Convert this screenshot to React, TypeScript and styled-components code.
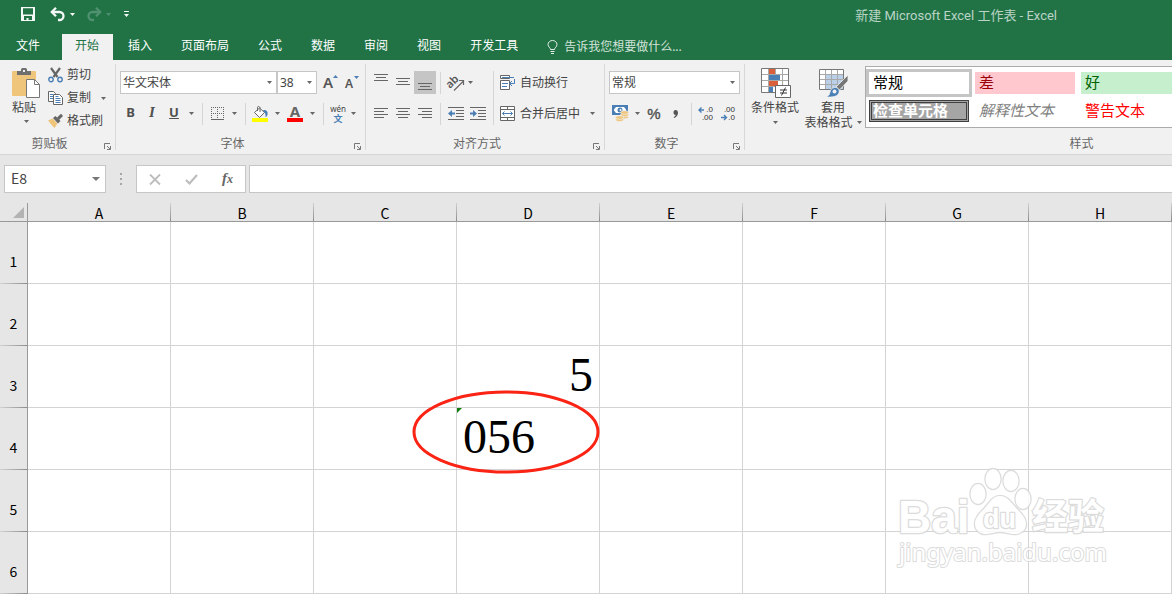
import React from "react";
import styled, { createGlobalStyle, css } from "styled-components";

const GlobalStyle = createGlobalStyle`
  * { box-sizing: border-box; }
  body {
    margin: 0;
    background: #e6e6e6;
    color: #444;
    font: 12px/16px "Noto Sans", "Noto Sans CJK SC", sans-serif;
  }
  button, input, select { font: inherit; color: inherit; margin: 0; }
  svg { display: block; flex: none; overflow: visible; }
`;

const Window = styled.div`
  overflow: hidden;
`;

/* ---------- title bar and tabs ---------- */

const TitleBar = styled.header`
  display: flex;
  align-items: center;
  height: 34px;
  padding: 0 115px 6px 17px;
  background: #217346;
  color: #fff;
`;

const QuickButton = styled.button<{ $w?: number; $dim?: boolean }>`
  display: flex;
  align-items: center;
  justify-content: center;
  flex: none;
  width: ${(p) => p.$w ?? 22}px;
  height: 22px;
  padding: 0;
  border: 0;
  background: none;
  color: ${(p) => (p.$dim ? "#4f9170" : "#f4f8f6")};
`;

const QuickGap = styled.span`
  width: 7px;
`;

const DocTitle = styled.h1`
  margin: 0 0 0 auto;
  padding-top: 4px;
  font: 400 13px/16px Roboto, "Noto Sans CJK SC", sans-serif;
  white-space: nowrap;
  color: #b9d3c5;
`;

const TabStrip = styled.nav`
  display: flex;
  gap: 2px;
  height: 26px;
  background: #217346;
  color: #fff;
`;

const Tab = styled.button<{ $active?: boolean; $file?: boolean }>`
  flex: none;
  padding: ${(p) => (p.$file ? "0 20px 2px 16px" : "0 14px 2px 13px")};
  border: 0;
  background: ${(p) => (p.$active ? "#f1f1f1" : "none")};
  color: ${(p) => (p.$active ? "#217346" : "#fff")};
  white-space: nowrap;
`;

const TellMe = styled.button`
  display: flex;
  align-items: center;
  gap: 6px;
  padding: 0 13px;
  border: 0;
  background: none;
  color: #d3e3da;
  white-space: nowrap;
`;

/* ---------- ribbon ---------- */

const Ribbon = styled.section`
  display: flex;
  padding: 4px 0;
  overflow: hidden;
  background: #f1f1f1;
  border-bottom: 1px solid #d5d5d5;
`;

const Group = styled.section<{ $w: number }>`
  display: flex;
  flex-direction: column;
  flex: none;
  width: ${(p) => p.$w}px;
  height: 86px;
  border-right: 1px solid #d8d8d8;
`;

const GroupBody = styled.div<{ $top?: number; $left?: number }>`
  display: flex;
  flex: 1;
  align-items: flex-start;
  padding: ${(p) => p.$top ?? 7}px 0 0 ${(p) => p.$left ?? 4}px;
`;

const GroupFooter = styled.footer`
  display: flex;
  align-items: flex-end;
  height: 13px;
  color: #666;
  text-align: center;
  line-height: 12px;
`;

const FooterLabel = styled.span`
  flex: 1;
`;

const Launcher = styled.button`
  display: flex;
  justify-content: center;
  width: 16px;
  padding: 0;
  border: 0;
  background: none;
`;

const Stack = styled.div<{ $gap?: number }>`
  display: flex;
  flex-direction: column;
  gap: ${(p) => p.$gap ?? 8}px;
`;

const Row = styled.div`
  display: flex;
  align-items: center;
  height: 23px;
`;

const IconButton = styled.button<{ $on?: boolean; $w?: number }>`
  display: flex;
  align-items: center;
  justify-content: center;
  flex: none;
  width: ${(p) => p.$w ?? 22}px;
  height: 23px;
  padding: 0;
  border: 0;
  background: ${(p) => (p.$on ? "#c5c5c5" : "none")};
  color: #444;
`;

const Glyph = styled.span<{ $style?: "bold" | "italic" | "underline" | "percent" }>`
  padding-bottom: 3px;
  color: #505050;
  font-size: 13px;
  font-weight: 700;
  ${(p) => p.$style === "italic" && css`font-family: "Liberation Serif", serif; font-style: italic; font-size: 15px;`}
  ${(p) => p.$style === "underline" && css`text-decoration: underline;`}
  ${(p) => p.$style === "percent" && css`padding-bottom: 0; font: 400 15px/16px "Liberation Sans", sans-serif; -webkit-text-stroke: 0.4px;`}
`;

const Divider = styled.span<{ $tall?: boolean }>`
  flex: none;
  width: 1px;
  height: ${(p) => (p.$tall ? 54 : 22)}px;
  margin: 0 3px 0 4px;
  background: #d5d5d5;
`;

const Spacer = styled.span<{ $w: number }>`
  flex: none;
  width: ${(p) => p.$w}px;
`;

const PasteButton = styled.button`
  display: flex;
  flex-direction: column;
  align-items: center;
  width: 34px;
  padding: 4px 0 0;
  border: 0;
  background: none;
`;

const PasteText = styled.span`
  padding: 2px 4px 4px 0;
`;

const BigButton = styled.button<{ $w: number }>`
  display: flex;
  flex-direction: column;
  align-items: center;
  flex: none;
  width: ${(p) => p.$w}px;
  padding: 0;
  border: 0;
  background: none;
  line-height: 15px;
  white-space: nowrap;
`;

const BigIcon = styled.span`
  display: flex;
  align-items: center;
  height: 34px;
  padding-left: 2px;
`;

const BigLine = styled.span`
  display: flex;
  align-items: center;
  gap: 4px;
  min-height: 15px;
`;

const TextButton = styled.button<{ $h?: number }>`
  display: flex;
  align-items: center;
  gap: 4px;
  height: ${(p) => p.$h ?? 23}px;
  padding: 0;
  border: 0;
  background: none;
  white-space: nowrap;
`;

const DropBox = styled.label<{ $w: number }>`
  display: grid;
  flex: none;
  align-items: center;
  width: ${(p) => p.$w}px;
  height: 23px;
  background: #fff;
  border: 1px solid #c6c6c6;

  & > select, & > svg { grid-area: 1 / 1; }
  & > svg { justify-self: end; margin-right: 4px; pointer-events: none; }
`;

const Select = styled.select`
  width: 100%;
  height: 21px;
  padding: 0 2px;
  border: 0;
  background: none;
  appearance: none;
`;

const Gallery = styled.div`
  display: grid;
  grid-template-columns: repeat(6, 100px);
  grid-auto-rows: 22px;
  gap: 6px;
  flex: 1;
  padding: 5px 3px;
  background: #fff;
  border: 1px solid #ababab;
`;

type StyleKind = "normal" | "bad" | "good" | "check" | "explain" | "warn" | "plain";

const kinds: Record<StyleKind, ReturnType<typeof css>> = {
  normal: css`background: #fff; color: #000; outline: 3px solid #c5c5c5;`,
  bad: css`background: #ffc7ce; color: #9c0006;`,
  good: css`background: #c6efce; color: #006100;`,
  check: css`background: #a5a5a5; color: #fff; font-weight: 700; border: 3px double #3f3f3f; padding: 0 1px 2px;`,
  explain: css`background: #fff; color: #7f7f7f; font-style: italic;`,
  warn: css`background: #fff; color: #f00;`,
  plain: css`background: #fff; color: #000;`,
};

const StyleCell = styled.button<{ $kind: StyleKind }>`
  display: flex;
  align-items: center;
  padding: 0 4px 2px;
  border: 0;
  font: 15px/16px "Noto Sans CJK SC", sans-serif;
  white-space: nowrap;
  ${(p) => kinds[p.$kind]}
`;

/* ---------- formula bar ---------- */

const FormulaBar = styled.section`
  display: flex;
  align-items: center;
  padding: 10px 0 10px 4px;
`;

const Field = styled.div<{ $w?: number }>`
  display: flex;
  align-items: center;
  flex: ${(p) => (p.$w ? "none" : 1)};
  width: ${(p) => (p.$w ? `${p.$w}px` : "auto")};
  height: 28px;
  background: #fff;
  border: 1px solid #c6c6c6;
  border-right-width: ${(p) => (p.$w ? 1 : 0)}px;
`;

const PlainInput = styled.input`
  flex: 1;
  min-width: 0;
  height: 26px;
  padding: 0 6px 2px;
  border: 0;
  background: none;
  font: 14px/16px "Noto Sans CJK SC", sans-serif;
`;

const Grip = styled.span`
  display: flex;
  justify-content: center;
  width: 30px;
`;

const Tools = styled.div`
  display: flex;
  justify-content: space-around;
  flex: 1;
`;

/* ---------- sheet ---------- */

const SheetArea = styled.main`
  position: relative;
`;

const Sheet = styled.table`
  width: 100%;
  table-layout: fixed;
  border-collapse: separate;
  border-spacing: 0;
  background: #fff;
  color: #000;
`;

const Corner = styled.th`
  width: 28px;
  height: 19px;
  padding: 0 3px 3px 0;
  vertical-align: bottom;
  background: #e6e6e6;
  border-right: 1px solid #999;
  border-bottom: 1px solid #999;

  & > svg { margin-left: auto; }
`;

const ColumnHead = styled.th`
  height: 19px;
  padding: 3px 1px 0 0;
  background: linear-gradient(#d0d0d0, #8c8c8c) right / 1px 100% no-repeat #e6e6e6;
  border-bottom: 1px solid #999;
  font: 400 14px/15px "Noto Sans CJK SC", sans-serif;
  text-align: center;
`;

const RowHead = styled.th`
  height: 62px;
  padding: 16px 0 0;
  background: linear-gradient(90deg, #d0d0d0, #8c8c8c) bottom / 100% 1px no-repeat #e6e6e6;
  border-right: 1px solid #999;
  font: 400 14px/16px "Noto Sans CJK SC", sans-serif;
  text-align: center;
`;

const Cell = styled.td<{ $align?: "left" | "right" }>`
  position: relative;
  height: 62px;
  padding: 0 6px 4px;
  border-right: 1px solid #d4d4d4;
  border-bottom: 1px solid #d4d4d4;
  font: 48px/56px "Liberation Serif", serif;
  text-align: ${(p) => p.$align ?? "left"};
`;

const ErrorFlag = styled.svg`
  position: absolute;
  top: 0;
  left: 0;
`;

const Circle = styled.svg`
  position: absolute;
  top: -19px;
  left: -46px;
  z-index: 1;
`;

const Watermark = styled.svg`
  position: absolute;
  right: 60px;
  bottom: 16px;
  pointer-events: none;
  opacity: 0.85;
  paint-order: stroke;
`;

/* ---------- icons ---------- */

const Arrow = ({ color = "#666", w = 5 }: { color?: string; w?: number }) => (
  <svg width={w} height={3} viewBox="0 0 5 3">
    <path d="M0 0h5L2.5 3z" fill={color} />
  </svg>
);

const SaveIcon = () => (
  <svg width="14" height="14" viewBox="0 0 14 14">
    <path fillRule="evenodd" fill="currentColor" d="M0 0h14v14H0zM2 1.300h10V7.500H2zM3 9h8v4H7.500v-2H5.500v2H3z" />
  </svg>
);

const UndoIcon = ({ flip }: { flip?: boolean }) => (
  <svg width="15" height="14" viewBox="0 0 15 14">
    <g transform={flip ? "matrix(-1 0 0 1 15 0)" : undefined} fill="none" stroke="currentColor" strokeWidth="2.300">
      <path d="M2 5h7.500a4 4 0 0 1 0 8H8" />
      <path d="M6 .8 1.800 5 6 9.200" />
    </g>
  </svg>
);

const CustomizeIcon = () => (
  <svg width="5" height="6" viewBox="0 0 5 6">
    <path d="M0 0h5v1H0zM0 3h5L2.500 6z" fill="currentColor" />
  </svg>
);

const BulbIcon = () => (
  <svg width="11" height="14" viewBox="0 0 11 14" fill="none" stroke="#e4eee8">
    <path d="M3.500 9.500C3.500 7.500 1 7 1 4.500a4.500 4 0 0 1 9 0C10 7 7.500 7.500 7.500 9.500zM3.500 11.500h4M4 13.500h3" />
  </svg>
);

const PasteIcon = () => (
  <svg width="28" height="30" viewBox="0 0 28 30">
    <rect y="3" width="24" height="25" rx="1" fill="#eec57b" />
    <path d="M5 7V3h4V1.500Q9 0 10.500 0h3Q15 0 15 1.500V3h4v4z" fill="#6f6f6f" />
    <rect x="11" y="2" width="2" height="2" fill="#f1f1f1" />
    <path d="M14.500 11.500h8l5 5v13h-13z" fill="#fff" stroke="#777" />
    <path d="M22.500 11.500v5h5" fill="none" stroke="#777" />
  </svg>
);

const CutIcon = () => (
  <svg width="15" height="16" viewBox="0 0 15 16" fill="none">
    <path d="M3 1l6.500 9M12 1L5.500 10" stroke="#666" strokeWidth="2.200" />
    <circle cx="3" cy="12.500" r="2.200" stroke="#4a7fb5" strokeWidth="1.400" />
    <circle cx="12" cy="12.500" r="2.200" stroke="#4a7fb5" strokeWidth="1.400" />
  </svg>
);

const CopyIcon = () => (
  <svg width="15" height="14" viewBox="0 0 15 14" fill="#fff">
    <path d="M.5.5h5l2 2v8h-7z" stroke="#666" />
    <path d="M2 3.500h3M2 5.500h3M2 7.500h3" stroke="#4a7fb5" />
    <path d="M5.500 3.500h6l3 3v7h-9z" stroke="#666" />
    <path d="M7.500 7.500h5M7.500 9.500h5M7.500 11.500h5M7.500 5.500h3" stroke="#4a7fb5" />
  </svg>
);

const PainterIcon = () => (
  <svg width="15" height="14" viewBox="0 0 15 14">
    <path d="M0 6.500 4.500 4.500l5 5L6.500 14C4.500 12 2.500 9.500 0 6.500z" fill="#eec57b" />
    <path d="M5 4l2.500-2 5 5-2.500 2.500z" fill="#666" />
    <path d="M9 3.500 13-.2l2 2.200-4 4z" fill="#666" />
  </svg>
);

const LauncherIcon = () => (
  <svg width="7" height="7" viewBox="0 0 7 7" fill="none" stroke="#777">
    <path d="M.5 6V.5H6M3 3l3 3M6.500 3v3.500H3" />
  </svg>
);

const SizeIcon = ({ down }: { down?: boolean }) => (
  <svg width="16" height="17" viewBox="0 0 16 17">
    <text x="0" y="14" fontFamily="Noto Sans, sans-serif" fontWeight="600" fontSize={down ? 12 : 15} fill="#555">A</text>
    <path d={down ? "M9 2h5l-2.500 3z" : "M10 4h5l-2.500-3z"} fill="#4a7fb5" />
  </svg>
);

const BorderIcon = () => (
  <svg width="13" height="13" viewBox="0 0 13 13" stroke="#666">
    <path d="M0 .5h13M0 6.500h13M.5 0v12M6.500 0v12M12.500 0v12" strokeDasharray="1 1" />
    <path d="M0 12.500h13" />
  </svg>
);

const FillIcon = () => (
  <svg width="16" height="16" viewBox="0 0 16 16">
    <path d="M2.500 6.500 7.500 2l5 4.500-5 5z" fill="#fff" stroke="#666" />
    <path d="M5.500 5V1.500Q5.500.5 6.500.5T8 1.500V6" fill="none" stroke="#666" />
    <path d="M11 4c4-.5 5 2 4.500 4.500C15.300 10 14.500 11 13.500 11c.5-3-.5-4-2.500-7z" fill="#4a7fb5" />
    <path d="M0 12h16v4H0z" fill="#ff0" />
  </svg>
);

const FontColorIcon = () => (
  <svg width="16" height="16" viewBox="0 0 16 16">
    <text x="8" y="11" textAnchor="middle" fontFamily="Noto Sans, sans-serif" fontWeight="700" fontSize="15" fill="#666">A</text>
    <path d="M0 12h16v4H0z" fill="#f00" />
  </svg>
);

const PinyinIcon = () => (
  <svg width="18" height="18" viewBox="0 0 18 18">
    <text x="9" y="7" textAnchor="middle" fontFamily="Noto Sans, sans-serif" fontSize="8" fill="#444">wén</text>
    <text x="9" y="17" textAnchor="middle" fontFamily="Noto Sans CJK SC, sans-serif" fontWeight="700" fontSize="9" fill="#4a7fb5">文</text>
  </svg>
);

const LinesIcon = ({ lines }: { lines: [number, number, number][] }) => (
  <svg width="14" height="17" viewBox="0 0 14 17" stroke="#666">
    {lines.map(([x, y, w]) => (
      <path key={y} d={`M${x} ${y}.5h${w}`} />
    ))}
  </svg>
);

const OrientationIcon = () => (
  <svg width="17" height="16" viewBox="0 0 17 16">
    <text x="0" y="11" transform="rotate(-45 5 9)" fontFamily="Noto Sans, sans-serif" fontWeight="600" fontSize="11" fill="#555">ab</text>
    <path d="M7 15.500 16 6.500M12 5.500H16.500V10" fill="none" stroke="#666" strokeWidth="1.200" />
  </svg>
);

const IndentIcon = ({ right }: { right?: boolean }) => (
  <svg width="16" height="13" viewBox="0 0 16 13">
    <path d="M0 .5h16M8 3.500h8M8 6.500h8M8 9.500h8M0 12.500h16" stroke="#666" />
    <path d={right ? "M0 5.500h3V3l4 3.500L3 10V7.500H0z" : "M7 5.500H4V3L0 6.500 4 10V7.500h3z"} fill="#4a7fb5" />
  </svg>
);

const WrapIcon = () => (
  <svg width="16" height="15" viewBox="0 0 16 15" fill="none">
    <path d="M.5.5h9v3h-9zM.5 5.500h9v9h-9z" fill="#fff" stroke="#666" />
    <path d="M2 2.500h12M2 8.500h6M2 11.500h5M14.500 4v4.500H10M12 6l-2.500 2.500L12 11" stroke="#4a7fb5" />
  </svg>
);

const MergeIcon = () => (
  <svg width="16" height="15" viewBox="0 0 16 15" fill="none">
    <path d="M.5.5h14v14H.5zM.5 3.500h14M.5 11.500h14M7.500.5v3M7.500 11.500v3" fill="#fff" stroke="#666" />
    <path d="M2.500 7.500h10M4.500 5.500l-2 2 2 2M10.500 5.500l2 2-2 2" stroke="#4a7fb5" />
  </svg>
);

const MoneyIcon = () => (
  <svg width="17" height="17" viewBox="0 0 17 17">
    <rect width="16" height="10" fill="#4a7fb5" />
    <path d="M2 2h12v6H2z" fill="#fff" />
    <path d="M2 4.500 4 2H2zM14 4.500 12 2h2zM2 5.500 4 8H2z" fill="#4a7fb5" />
    <circle cx="8" cy="5" r="2.500" fill="#4a7fb5" />
    <circle cx="8.500" cy="5" r="1" fill="#fff" />
    <g fill="#eec57b" stroke="#f1f1f1" strokeWidth=".7">
      <ellipse cx="12.500" cy="12" rx="4" ry="1.800" />
      <ellipse cx="12.500" cy="9.800" rx="4" ry="1.800" />
      <ellipse cx="12.500" cy="7.500" rx="4" ry="1.800" />
      <ellipse cx="7.500" cy="14.800" rx="4" ry="1.800" />
      <ellipse cx="7.500" cy="12.500" rx="4" ry="1.800" />
    </g>
  </svg>
);

const CommaIcon = () => (
  <svg width="6" height="8" viewBox="0 0 6 8">
    <path d="M2.500 0C4.200 0 5 1.200 5 2.700 5 5.500 3.500 7 1 8L.7 7.200C2 6.500 2.600 5.800 2.700 4.800 1.300 5 .5 4 .5 2.500.5 1 1.200 0 2.500 0z" fill="#555" />
  </svg>
);

const DecimalIcon = ({ less }: { less?: boolean }) => (
  <svg width="16" height="15" viewBox="0 0 16 15" fontFamily="Liberation Sans, sans-serif" fontSize="8" fill="#333">
    <text x="15" y="6" textAnchor="end">{less ? ".00" : ".0"}</text>
    <text x="15" y="14" textAnchor="end">{less ? ".0" : ".00"}</text>
    <path d={less ? "M1 11.500h5M4 9l2.500 2.500L4 14" : "M1 4h5M3.500 1.500 1 4l2.500 2.500"} fill="none" stroke="#4a7fb5" strokeWidth="1.400" />
  </svg>
);

const ConditionalIcon = () => (
  <svg width="31" height="31" viewBox="0 0 31 31">
    <path d="M.5.5h27v24H.5z" fill="#fff" stroke="#777" />
    <path d="M7.500 1v23M14.500 1v23M21.500 1v23M1 6.500h26M1 12.500h26M1 18.500h26" stroke="#a8a8a8" />
    <path d="M8 1h6v5H8zM8 13h9v5H8z" fill="#d9603b" />
    <path d="M8 7h11v5H8zM8 19h4v5H8z" fill="#4a7fb5" />
    <path d="M14.500 17.500h15v12h-15z" fill="#fff" stroke="#666" />
    <path d="M19 22h7M19 25h7M24.500 19.500l-4 8" stroke="#333" />
  </svg>
);

const TableFormatIcon = () => (
  <svg width="30" height="29" viewBox="0 0 30 29">
    <path d="M.5.5h24v20H.5z" fill="#fff" />
    <path d="M7 6h18v15H7z" fill="#b9d0e8" />
    <path d="M6.500 1v20M12.500 1v20M18.500 1v20M1 5.500h23M1 10.500h23M1 15.500h23" stroke="#a8a8a8" />
    <path d="M.5.5h24v20H.5z" fill="none" stroke="#777" />
    <path d="M29 6v6l-8.500 9-3.500-3z" fill="#777" stroke="#f1f1f1" strokeWidth=".8" />
    <path d="M15.500 18.500c3-.5 5.500 2 4.500 5-1.200 4-6 5-13 4.500 3.500-1.500 3.500-3 4-5 .6-2.500 2-4.200 4.500-4.500z" fill="#4a7fb5" stroke="#f1f1f1" strokeWidth=".8" />
    <circle cx="15.500" cy="22.500" r="2" fill="#f1f1f1" />
  </svg>
);

/* ---------- data ---------- */

const tabs = ["开始", "插入", "页面布局", "公式", "数据", "审阅", "视图", "开发工具"];
const columns = ["A", "B", "C", "D", "E", "F", "G", "H"];
const rows = [1, 2, 3, 4, 5, 6];

const styleCells: [string, StyleKind][] = [
  ["常规", "normal"], ["差", "bad"], ["好", "good"], ["", "plain"], ["", "plain"], ["", "plain"],
  ["检查单元格", "check"], ["解释性文本", "explain"], ["警告文本", "warn"],
];

const Footer = ({ label, launcher = true }: { label: string; launcher?: boolean }) => (
  <GroupFooter>
    <FooterLabel>{label}</FooterLabel>
    {launcher && <Launcher aria-label={`${label}设置`}><LauncherIcon /></Launcher>}
  </GroupFooter>
);

const DropArrow = ({ label, w = 13 }: { label: string; w?: number }) => (
  <IconButton $w={w} aria-label={label}><Arrow /></IconButton>
);

const Dropdown = ({ label, value, width }: { label: string; value: string; width: number }) => (
  <DropBox $w={width}>
    <Select aria-label={label} defaultValue={value}>
      <option>{value}</option>
    </Select>
    <Arrow />
  </DropBox>
);

export default function App() {
  return (
    <Window>
      <GlobalStyle />
      <TitleBar>
        <QuickButton aria-label="保存"><SaveIcon /></QuickButton>
        <QuickGap />
        <QuickButton aria-label="撤消"><UndoIcon /></QuickButton>
        <QuickButton $w={9} aria-label="撤消列表"><Arrow color="currentColor" /></QuickButton>
        <QuickGap />
        <QuickButton $dim $w={20} aria-label="恢复"><UndoIcon flip /></QuickButton>
        <QuickButton $w={9} $dim aria-label="恢复列表"><Arrow color="currentColor" /></QuickButton>
        <QuickButton $w={26} aria-label="自定义快速访问工具栏"><CustomizeIcon /></QuickButton>
        <DocTitle>新建 Microsoft Excel 工作表 - Excel</DocTitle>
      </TitleBar>
      <TabStrip>
        <Tab $file>文件</Tab>
        {tabs.map((t, i) => (
          <Tab key={t} $active={i === 0}>{t}</Tab>
        ))}
        <TellMe><BulbIcon />告诉我您想要做什么...</TellMe>
      </TabStrip>

      <Ribbon>
        <Group $w={116}>
          <GroupBody $top={0} $left={9}>
            <PasteButton>
              <PasteIcon />
              <PasteText>粘贴</PasteText>
              <Arrow />
            </PasteButton>
            <Spacer $w={5} />
            <Stack $gap={1}>
              <TextButton $h={22}><CutIcon />剪切</TextButton>
              <TextButton $h={22}><CopyIcon />复制<Spacer $w={2} /><Arrow /></TextButton>
              <TextButton $h={22}><PainterIcon />格式刷</TextButton>
            </Stack>
          </GroupBody>
          <Footer label="剪贴板" />
        </Group>

        <Group $w={250}>
          <GroupBody>
            <Stack>
              <Row>
                <Dropdown label="字体" value="华文宋体" width={157} />
                <Dropdown label="字号" value="38" width={40} />
                <Spacer $w={3} />
                <IconButton aria-label="增大字号"><SizeIcon /></IconButton>
                <IconButton aria-label="减小字号"><SizeIcon down /></IconButton>
              </Row>
              <Row>
                <IconButton $w={21} aria-label="加粗"><Glyph $style="bold">B</Glyph></IconButton>
                <IconButton aria-label="倾斜"><Glyph $style="italic">I</Glyph></IconButton>
                <IconButton aria-label="下划线"><Glyph $style="underline">U</Glyph></IconButton>
                <DropArrow label="下划线样式" />
                <Divider />
                <IconButton aria-label="边框"><BorderIcon /></IconButton>
                <DropArrow label="边框样式" />
                <Divider />
                <IconButton aria-label="填充颜色"><FillIcon /></IconButton>
                <DropArrow label="选择填充颜色" />
                <IconButton aria-label="字体颜色"><FontColorIcon /></IconButton>
                <DropArrow label="选择字体颜色" />
                <Divider />
                <IconButton aria-label="拼音"><PinyinIcon /></IconButton>
                <DropArrow label="拼音设置" w={9} />
              </Row>
            </Stack>
          </GroupBody>
          <Footer label="字体" />
        </Group>

        <Group $w={239}>
          <GroupBody>
            <Stack>
              <Row>
                <IconButton aria-label="顶端对齐"><LinesIcon lines={[[0, 0, 14], [2, 3, 10], [0, 6, 14]]} /></IconButton>
                <IconButton aria-label="垂直居中"><LinesIcon lines={[[0, 4, 14], [2, 7, 10], [0, 10, 14]]} /></IconButton>
                <IconButton $on aria-label="底端对齐"><LinesIcon lines={[[0, 9, 14], [2, 12, 10], [0, 15, 14]]} /></IconButton>
                <Divider />
                <IconButton aria-label="方向"><OrientationIcon /></IconButton>
                <DropArrow label="方向选项" w={9} />
              </Row>
              <Row>
                <IconButton aria-label="左对齐"><LinesIcon lines={[[0, 3, 14], [0, 6, 10], [0, 9, 14], [0, 12, 10]]} /></IconButton>
                <IconButton aria-label="居中"><LinesIcon lines={[[0, 3, 14], [2, 6, 10], [0, 9, 14], [2, 12, 10]]} /></IconButton>
                <IconButton aria-label="右对齐"><LinesIcon lines={[[0, 3, 14], [4, 6, 10], [0, 9, 14], [4, 12, 10]]} /></IconButton>
                <Divider />
                <IconButton $w={23} aria-label="减少缩进量"><IndentIcon /></IconButton>
                <IconButton aria-label="增加缩进量"><IndentIcon right /></IconButton>
              </Row>
            </Stack>
            <Divider $tall />
            <Spacer $w={3} />
            <Stack>
              <TextButton><WrapIcon />自动换行</TextButton>
              <TextButton><MergeIcon />合并后居中<Spacer $w={2} /><Arrow /></TextButton>
            </Stack>
          </GroupBody>
          <Footer label="对齐方式" />
        </Group>

        <Group $w={140}>
          <GroupBody>
            <Stack>
              <Dropdown label="数字格式" value="常规" width={131} />
              <Row>
                <IconButton aria-label="会计数字格式"><MoneyIcon /></IconButton>
                <DropArrow label="货币选项" w={12} />
                <IconButton aria-label="百分比样式"><Glyph $style="percent">%</Glyph></IconButton>
                <IconButton aria-label="千位分隔样式"><CommaIcon /></IconButton>
                <Divider />
                <IconButton aria-label="增加小数位数"><DecimalIcon /></IconButton>
                <IconButton aria-label="减少小数位数"><DecimalIcon less /></IconButton>
              </Row>
            </Stack>
          </GroupBody>
          <Footer label="数字" />
        </Group>

        <Group $w={674}>
          <GroupBody $top={2}>
            <BigButton $w={52}>
              <BigIcon><ConditionalIcon /></BigIcon>
              <BigLine>条件格式</BigLine>
              <BigLine><Arrow /></BigLine>
            </BigButton>
            <BigButton $w={64}>
              <BigIcon><TableFormatIcon /></BigIcon>
              <BigLine>套用</BigLine>
              <BigLine>表格格式<Arrow /></BigLine>
            </BigButton>
            <Gallery>
              {styleCells.map(([name, kind], i) => (
                <StyleCell key={i} $kind={kind}>{name}</StyleCell>
              ))}
            </Gallery>
          </GroupBody>
          <Footer label="样式" launcher={false} />
        </Group>
      </Ribbon>

      <FormulaBar>
        <Field $w={102}>
          <PlainInput aria-label="名称框" defaultValue="E8" />
          <IconButton $w={18} aria-label="名称列表">
            <svg width="8" height="4" viewBox="0 0 8 4"><path d="M0 0h8L4 4z" fill="#777" /></svg>
          </IconButton>
        </Field>
        <Grip>
          <svg width="2" height="12" viewBox="0 0 2 12"><path d="M0 0h2v2H0zM0 5h2v2H0zM0 10h2v2H0z" fill="#a6a6a6" /></svg>
        </Grip>
        <Field $w={110}>
          <Tools>
            <IconButton aria-label="取消">
              <svg width="12" height="11" viewBox="0 0 12 11"><path d="M1 .5l10 10M11 .5l-10 10" stroke="#bdbdbd" strokeWidth="1.800" /></svg>
            </IconButton>
            <IconButton aria-label="输入">
              <svg width="13" height="11" viewBox="0 0 13 11"><path d="M1 6l3.500 3.500L12 1" fill="none" stroke="#bdbdbd" strokeWidth="2.200" /></svg>
            </IconButton>
            <IconButton aria-label="插入函数">
              <svg width="14" height="14" viewBox="0 0 14 14">
                <text x="2" y="11" fill="#666" fontFamily="Liberation Serif, serif" fontStyle="italic" fontWeight="700" fontSize="15">
                  f<tspan fontSize="12">x</tspan>
                </text>
              </svg>
            </IconButton>
          </Tools>
        </Field>
        <Spacer $w={3} />
        <Field><PlainInput aria-label="编辑栏" /></Field>
      </FormulaBar>

      <SheetArea>
        <Sheet>
          <thead>
            <tr>
              <Corner aria-label="全选">
                <svg width="11" height="11" viewBox="0 0 11 11"><path d="M11 0v11H0z" fill="#b3b3b3" /></svg>
              </Corner>
              {columns.map((c) => <ColumnHead key={c} scope="col">{c}</ColumnHead>)}
            </tr>
          </thead>
          <tbody>
            {rows.map((r) => (
              <tr key={r}>
                <RowHead scope="row">{r}</RowHead>
                {columns.map((c) => {
                  const id = c + r;
                  if (id === "D3") return <Cell key={id} $align="right">5</Cell>;
                  if (id === "D4")
                    return (
                      <Cell key={id}>
                        <ErrorFlag width="5" height="5" viewBox="0 0 5 5"><path d="M0 0h5L0 5z" fill="#107c10" /></ErrorFlag>
                        056
                        <Circle width="190" height="86" viewBox="0 0 190 86">
                          <ellipse cx="95" cy="43" rx="92" ry="40" fill="none" stroke="#fa2314" strokeWidth="3" />
                        </Circle>
                      </Cell>
                    );
                  return <Cell key={id} />;
                })}
              </tr>
            ))}
          </tbody>
        </Sheet>
        <Watermark width="216" height="112" viewBox="0 0 216 112" fill="#fff" stroke="#d6d6d6" strokeWidth="2.500" strokeLinejoin="round">
          <ellipse cx="82" cy="28" rx="7.500" ry="10" />
          <ellipse cx="97" cy="13" rx="7.500" ry="10" />
          <ellipse cx="115" cy="15" rx="7.500" ry="10" />
          <ellipse cx="127" cy="33" rx="7.500" ry="10" />
          <path d="M104 30c8 0 12 8 17 13 6 6 9 10 9 15 0 7-6 10-11 10-6 0-9-2-15-2s-9 2-15 2c-5 0-10-4-10-10 0-6 4-10 9-15s8-13 16-13z" />
          <g fontFamily="Liberation Sans, sans-serif" fontWeight="700">
            <text x="2" y="67" fontSize="46">Bai</text>
            <text x="87" y="62" fontSize="27">du</text>
            <text x="136" y="64" fontSize="36" fontFamily="Noto Sans CJK SC, sans-serif">经验</text>
          </g>
          <text x="3" y="95" fontSize="24" fontFamily="Noto Sans, sans-serif" strokeWidth="2">jingyan.baidu.com</text>
        </Watermark>
      </SheetArea>
    </Window>
  );
}
